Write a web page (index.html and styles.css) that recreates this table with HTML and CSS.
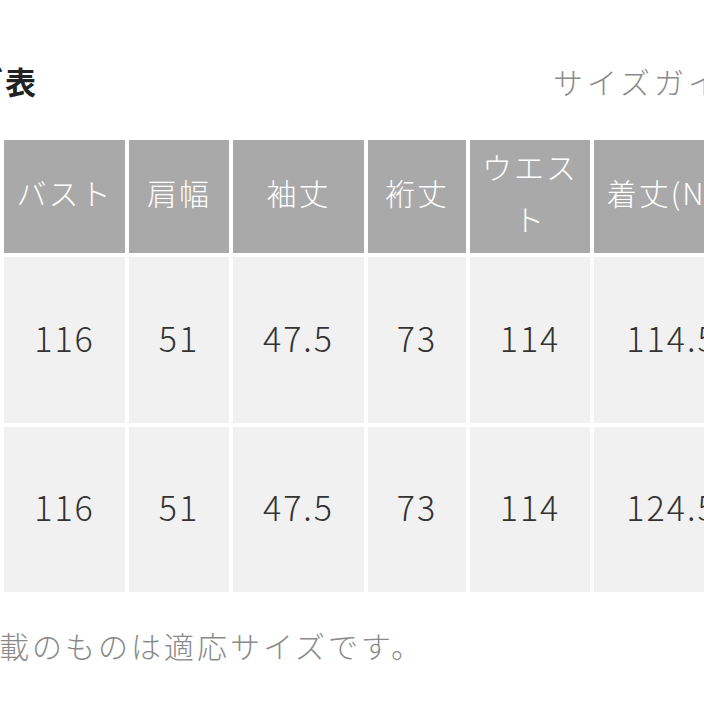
FILE: index.html
```html
<!DOCTYPE html>
<html lang="ja">
<head>
<meta charset="utf-8">
<link rel="stylesheet" href="styles.css">
</head>
<body>
<div class="page">
  <div class="head">
    <div class="title">サイズ表</div>
    <div class="guide">サイズガイド</div>
  </div>
  <table class="chart">
    <colgroup>
      <col class="c1"><col class="c2"><col class="c3"><col class="c4"><col class="c5"><col class="c6">
    </colgroup>
    <thead>
      <tr>
        <th>バスト</th><th>肩幅</th><th>袖丈</th><th>裄丈</th><th>ウエスト</th><th>着丈(NP)</th>
      </tr>
    </thead>
    <tbody>
      <tr class="r1">
        <td>116</td><td>51</td><td>47.5</td><td>73</td><td>114</td><td>114.5</td>
      </tr>
      <tr class="r2">
        <td>116</td><td>51</td><td>47.5</td><td>73</td><td>114</td><td>124.5</td>
      </tr>
    </tbody>
  </table>
  <p class="note">記載のものは適応サイズです。</p>
</div>
</body>
</html>
```

FILE: styles.css
```css
html, body {
  margin: 0;
  padding: 0;
  background: #ffffff;
  overflow: hidden;
}
body {
  width: 704px;
  height: 704px;
  font-family: "Noto Sans CJK JP", "Noto Sans", sans-serif;
}
.page {
  width: 704px;
}
.head {
  display: grid;
  grid-template-columns: 553px 400px;
  padding-top: 59px;
  margin-bottom: 33px;
  line-height: 44px;
  white-space: nowrap;
}
.title {
  margin-left: -93px;
  font-size: 31px;
  font-weight: 700;
  color: #222222;
  letter-spacing: 2px;
}
.guide {
  font-size: 30px;
  font-weight: 300;
  color: #8a8a8a;
  letter-spacing: 4px;
}
.chart {
  border-collapse: separate;
  border-spacing: 4px;
  table-layout: fixed;
  width: 754px;
}
.c1 { width: 121px; }
.c2 { width: 100px; }
.c3 { width: 131px; }
.c4 { width: 98px; }
.c5 { width: 120px; }
.c6 { width: 156px; }
.chart th {
  height: 104px;
  padding: 0 0 9px;
  background: #a9a9a9;
  color: #ffffff;
  font-size: 30px;
  font-weight: 300;
  line-height: 52px;
  letter-spacing: 2px;
  text-align: center;
  vertical-align: middle;
}
.chart td {
  padding: 0 0 6px;
  background: #f1f1f1;
  color: #333333;
  font-size: 34px;
  font-weight: 300;
  letter-spacing: 2px;
  text-align: center;
  vertical-align: middle;
}
.r1 td { height: 160px; }
.r2 td { height: 159px; }
.note {
  margin: 27px 0 0 -34px;
  font-size: 30px;
  font-weight: 300;
  line-height: 44px;
  color: #8a8a8a;
  letter-spacing: 3px;
  white-space: nowrap;
}
```
